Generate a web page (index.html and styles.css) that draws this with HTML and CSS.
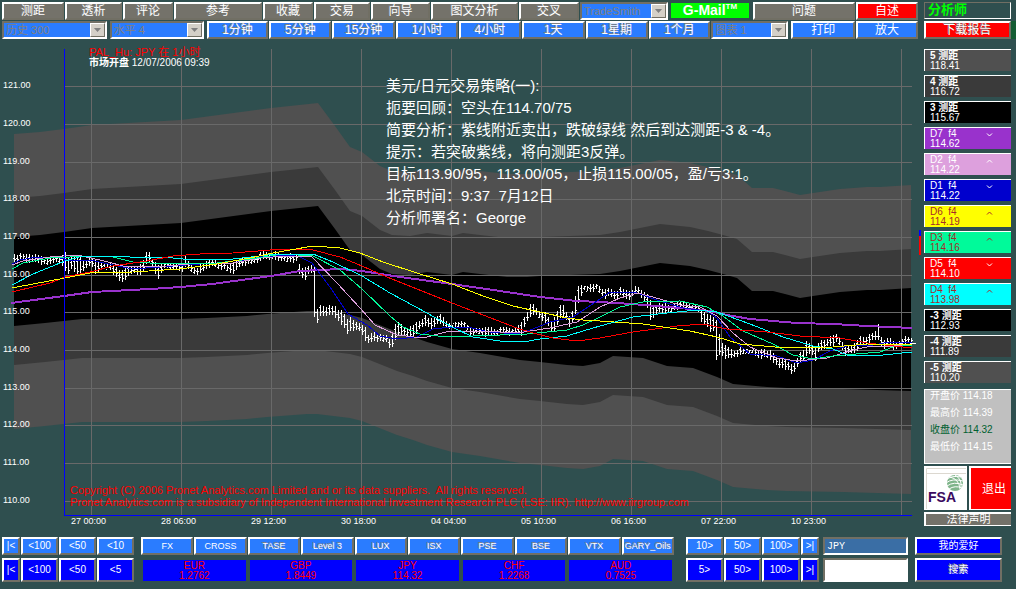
FILE: index.html
```html
<!DOCTYPE html>
<html lang="zh-CN">
<head>
<meta charset="utf-8">
<title>分析师</title>
<link rel="stylesheet" href="styles.css">
</head>
<body>
<div class="top">
  <main class="main">
    <nav class="bar bar-menu">
      <button class="btn gray dim">测距</button>
      <button class="btn gray dim">透析</button>
      <button class="btn gray dim">评论</button>
      <button class="btn gray dim">参考</button>
      <button class="btn gray dim">收藏</button>
      <button class="btn gray dim">交易</button>
      <button class="btn gray dim">向导</button>
      <button class="btn gray dim">图文分析</button>
      <button class="btn gray dim">交叉</button>
      <span class="pick"><select aria-label="TradeSmith"><option>TradeSmith</option></select><svg class="arrow" viewBox="0 0 15 15"><path d="M3 5h9l-4.500 5z"/></svg></span>
      <button class="gmail">G-Mail<sup>TM</sup></button>
      <button class="btn gray dim">问题</button>
      <button class="btn red">自述</button>
    </nav>
    <nav class="bar bar-time">
      <span class="pick"><select aria-label="历史"><option>历史 300</option></select><svg class="arrow" viewBox="0 0 15 15"><path d="M3 5h9l-4.500 5z"/></svg></span>
      <span class="pick"><select aria-label="水平"><option>水平 4</option></select><svg class="arrow" viewBox="0 0 15 15"><path d="M3 5h9l-4.500 5z"/></svg></span>
      <button class="btn sky dim">1分钟</button>
      <button class="btn sky dim">5分钟</button>
      <button class="btn sky dim">15分钟</button>
      <button class="btn sky dim">1小时</button>
      <button class="btn sky dim">4小时</button>
      <button class="btn sky dim">1天</button>
      <button class="btn sky dim">1星期</button>
      <button class="btn sky dim">1个月</button>
      <span class="pick"><select aria-label="图表"><option>图表 1</option></select><svg class="arrow" viewBox="0 0 15 15"><path d="M3 5h9l-4.500 5z"/></svg></span>
      <button class="btn sky">打印</button>
      <button class="btn sky">放大</button>
    </nav>
    <section class="chart">
      <svg class="plot" viewBox="0 40 918 490" role="img" aria-label="JPY 1小时">
        <g id="bands"></g>
        <path class="grid" d="M91.500 49V515M181.500 49V515M271.500 49V515M361.500 49V515M451.500 49V515M541.500 49V515M631.500 49V515M721.500 49V515M811.500 49V515M901.500 49V515M64 86.500H912M64 124.500H912M64 162.500H912M64 199.500H912M64 237.500H912M64 275.500H912M64 312.500H912M64 350.500H912M64 388.500H912M64 425.500H912M64 463.500H912M64 501.500H912"/>
        <path id="bars" class="bars"/>
        <g class="lines">
          <polyline class="d7" points="11,303 64,296 92,292 150,289 181,287 212,284 271,276 300,271 340,269 362,271 400,277 452,284 500,291 540,297 577,301 600,302 632,304 680,308 710,311 727,315 750,319 797,323 833,324 867,326 912,328"/>
          <polyline class="d1" points="12,264 20,260 37,257 57,257 67,260 90,260 113,265 133,269 160,267 200,264 233,263 260,257 290,255 300,257 312,263 330,287 348,314 367,325 380,336 397,339 417,337 433,329 452,327 467,327 490,332 517,334 533,329 550,322 573,317 597,301 610,292 637,293 660,301 683,308 707,311 717,318 730,337 750,354 777,356 797,363 813,360 830,351 847,346 873,345 890,342 912,342"/>
          <polyline class="d2" points="12,265 23,261 50,257 77,255 100,260 127,267 167,266 200,263 233,263 260,258 287,256 312,257 337,283 360,308 375,325 397,335 423,338 450,331 483,331 517,333 550,328 577,322 600,307 620,298 638,293 660,299 680,305 700,307 717,316 733,333 750,347 777,358 797,361 827,358 853,350 867,347 893,346 912,344"/>
          <polyline class="d3" points="12,269 23,263 50,258 90,256 113,257 133,262 167,264 217,263 250,259 283,254 313,256 340,270 362,289 390,316 403,327 420,334 447,337 473,336 527,334 567,330 583,325 600,317 620,307 643,302 680,301 707,307 723,316 743,331 773,344 793,355 813,359 833,356 880,352 893,347 912,345"/>
          <polyline class="d4" points="12,285 33,274 65,261 83,256 113,256 130,257 163,257 183,259 233,259 277,254 313,254 333,262 362,276 390,293 427,313 452,327 473,337 500,341 523,342 540,339 567,336 583,331 600,326 633,317 667,313 697,310 717,312 750,324 783,337 813,346 833,349 847,355 883,355 912,352"/>
          <polyline class="d5" points="12,292 33,287 50,283 65,277 90,272 113,266 147,261 173,256 200,254 233,253 283,249 313,250 340,257 362,266 387,277 427,293 452,303 483,315 517,328 533,333 553,338 577,341 600,338 633,332 677,326 703,324 727,329 767,332 800,336 840,338 867,343 912,348"/>
          <polyline class="d6" points="12,288 33,284 65,278 90,273 133,272 180,269 217,264 250,258 273,253 313,246 340,248 360,253 383,262 417,273 452,284 483,296 513,306 540,312 567,318 583,320 600,321 643,324 690,331 717,337 740,344 787,348 833,347 867,344 912,345"/>
        </g>
        <path class="axis" d="M64.500 49V515.500H912"/>
        <path class="mark-blue" d="M920 230v6"/>
        <path class="mark-red" d="M920 236v19"/>
        <g class="label">
          <text x="3" y="88">121.00</text><text x="3" y="126">120.00</text><text x="3" y="164">119.00</text>
          <text x="3" y="201">118.00</text><text x="3" y="239">117.00</text><text x="3" y="277">116.00</text>
          <text x="3" y="314">115.00</text><text x="3" y="352">114.00</text><text x="3" y="390">113.00</text>
          <text x="3" y="427">112.00</text><text x="3" y="465">111.00</text><text x="3" y="503">110.00</text>
        </g>
        <g class="label">
          <text x="71" y="524">27 00:00</text><text x="161" y="524">28 06:00</text><text x="251" y="524">29 12:00</text>
          <text x="341" y="524">30 18:00</text><text x="431" y="524">04 04:00</text><text x="521" y="524">05 10:00</text>
          <text x="611" y="524">06 16:00</text><text x="701" y="524">07 22:00</text><text x="791" y="524">10 23:00</text>
        </g>
        <g class="legal">
          <text x="70" y="494">Copyright (C) 2006 Pronet Analytics.com Limited and or its data suppliers.&#160; All rights reserved.</text>
          <text x="70" y="506">Pronet Analytics.com is a subsidiary of Independent International Investment Research PLC (LSE: IIR). http://www.iirgroup.com</text>
        </g>
        <text class="title" x="89" y="56">PAL_Hu: JPY 在 1小时</text>
        <text class="open" x="89" y="66"><tspan class="strong">市场开盘</tspan> 12/07/2006 09:39</text>
      </svg>
      <div class="notes">
        <p>美元/日元交易策略(一):</p>
        <p>扼要回顾：空头在114.70/75</p>
        <p>简要分析：紫线附近卖出，跌破绿线 然后到达测距-3 &amp; -4。</p>
        <p>提示：若突破紫线，将向测距3反弹。</p>
        <p>目标113.90/95，113.00/05，止损115.00/05，盈/亏3:1。</p>
        <p>北京时间：9:37&nbsp; 7月12日</p>
        <p>分析师署名：George</p>
      </div>
    </section>
  </main>
  <aside class="side">
    <h1 class="brand">分析师</h1>
    <button class="btn red report dim">下载报告</button>
    <ul class="cards">
      <li class="card g5"><b>5 测距</b><span>118.41</span></li>
      <li class="card g4"><b>4 测距</b><span>116.72</span></li>
      <li class="card g3"><b>3 测距</b><span>115.67</span></li>
      <li class="card c7"><i>D7&nbsp; f4</i><span>114.62</span><svg class="chev" viewBox="0 0 7 4"><path d="M1 .5l2.500 2.500L6 .5"/></svg></li>
      <li class="card c2"><i>D2&nbsp; f4</i><span>114.22</span><svg class="chev" viewBox="0 0 7 4"><path d="M1 3.500L3.500 1 6 3.500"/></svg></li>
      <li class="card c1"><i>D1&nbsp; f4</i><span>114.22</span><svg class="chev" viewBox="0 0 7 4"><path d="M1 .5l2.500 2.500L6 .5"/></svg></li>
      <li class="card c6"><i>D6&nbsp; f4</i><span>114.19</span><svg class="chev" viewBox="0 0 7 4"><path d="M1 3.500L3.500 1 6 3.500"/></svg></li>
      <li class="card c3"><i>D3&nbsp; f4</i><span>114.16</span><svg class="chev" viewBox="0 0 7 4"><path d="M1 3.500L3.500 1 6 3.500"/></svg></li>
      <li class="card c5"><i>D5&nbsp; f4</i><span>114.10</span><svg class="chev" viewBox="0 0 7 4"><path d="M1 .5l2.500 2.500L6 .5"/></svg></li>
      <li class="card c4"><i>D4&nbsp; f4</i><span>113.98</span><svg class="chev" viewBox="0 0 7 4"><path d="M1 3.500L3.500 1 6 3.500"/></svg></li>
      <li class="card g3"><b>-3 测距</b><span>112.93</span></li>
      <li class="card g4"><b>-4 测距</b><span>111.89</span></li>
      <li class="card g5"><b>-5 测距</b><span>110.20</span></li>
    </ul>
    <div class="quote">
      <p>开盘价 114.18</p>
      <p>最高价 114.39</p>
      <p class="close">收盘价 114.32</p>
      <p>最低价 114.15</p>
    </div>
    <div class="pair">
      <a class="fsa" href="#" aria-label="FSA">
        <svg viewBox="0 0 43 44">
          <path class="fsa-line" d="M2.500 43V2.500H42M3 7.500H42"/>
          <circle class="globe" cx="31" cy="17" r="8"/>
          <path class="globe-cut" d="M22 14q5-5 15-3M22 17q6-5 17-2M23 20q7-5 16-1M25 23q6-4 13-1M26 11q9 2 10 12M31 9q7 4 6 12"/>
          <text class="fsa-name" x="4" y="36">FSA</text>
        </svg>
      </a>
      <button class="exit">退出</button>
    </div>
    <button class="terms">法律声明</button>
  </aside>
  <div class="edge"></div>
</div>
<footer class="foot">
  <div class="nav nav-back">
    <button class="btn sky">|&lt;</button><button class="btn sky">&lt;100</button><button class="btn sky">&lt;50</button><button class="btn sky">&lt;10</button>
    <button class="btn blue">|&lt;</button><button class="btn blue">&lt;100</button><button class="btn blue">&lt;50</button><button class="btn blue">&lt;5</button>
  </div>
  <div class="market">
    <div class="tabs">
      <button class="btn sky">FX</button><button class="btn sky">CROSS</button><button class="btn sky dim">TASE</button><button class="btn sky dim">Level 3</button><button class="btn sky dim">LUX</button><button class="btn sky dim">ISX</button><button class="btn sky dim">PSE</button><button class="btn sky dim">BSE</button><button class="btn sky dim">VTX</button><button class="btn sky dim">GARY_Oils</button>
    </div>
    <div class="rates">
      <button class="rate">EUR<br>1.2762</button><button class="rate">GBP<br>1.8449</button><button class="rate">JPY<br>114.32</button><button class="rate">CHF<br>1.2268</button><button class="rate">AUD<br>0.7525</button>
    </div>
  </div>
  <div class="nav nav-fwd">
    <button class="btn sky">10&gt;</button><button class="btn sky">50&gt;</button><button class="btn sky">100&gt;</button><button class="btn sky">&gt;|</button>
    <button class="btn blue">5&gt;</button><button class="btn blue">50&gt;</button><button class="btn blue">100&gt;</button><button class="btn blue">&gt;|</button>
  </div>
  <div class="stack">
    <input class="field code" type="text" value="JPY" aria-label="代码">
    <input class="field" type="text" aria-label="搜索">
  </div>
  <div class="stack last">
    <button class="btn blue">我的爱好</button>
    <button class="btn blue dim">搜索</button>
  </div>
</footer>
<script src="chart.js"></script>
</body>
</html>
```
FILE: styles.css
```css
* { box-sizing: border-box; }

body {
  margin: 0;
  background: #2f4f4f;
  color: #fff;
  font: 10px/10px "Liberation Sans", "Noto Sans CJK SC", sans-serif;
}

button, select, input { font: inherit; color: inherit; margin: 0; padding: 0; min-width: 0; border-radius: 0; }
p, ul, h1 { margin: 0; padding: 0; }

.top { display: flex; gap: 6px; padding-top: 2px; overflow: hidden; }
.main { flex: 1; min-width: 0; }
.bar { display: grid; gap: 1px; padding-left: 2px; height: 18px; }
.bar-menu { grid-template-columns: 62fr 57fr 50fr 88fr 50fr 56fr 59fr 87fr 60fr 90fr 81fr 102fr 62fr; }
.bar-time { grid-template-columns: 107fr 96fr 62fr 62fr 63fr 62fr 62fr 63fr 62fr 62fr 79fr 64fr 62fr; margin: 1px 0; }

.btn {
  border: 2px solid;
  border-color: #fff #716f64 #716f64 #fff;
  font-size: 10px;
  line-height: 12px;
  text-align: center;
  white-space: nowrap;
  overflow: hidden;
}
.bar .btn, .report { height: 18px; font-size: 12px; line-height: 14px; }
.gray { background: #74726a; }
.sky { background: #2a7cff; }
.blue { background: #00f; }
.red { background: #f00; }
.dim { text-shadow: -1px -1px 0 #808080; }

.pick { position: relative; display: flex; height: 18px; margin-right: 2px; border: 2px solid; border-color: #716f64 #fff #fff #716f64; }
.pick select { flex: 1; appearance: none; border: 0; background: #2a7cff; color: #808080; font-size: 11px; line-height: 14px; padding-left: 2px; }
.arrow { position: absolute; right: 0; top: 0; width: 15px; height: 14px; background: #d4d0c8; border: 1px solid; border-color: #fff #716f64 #716f64 #fff; fill: #808080; }
.gmail { margin: 1px 3px 0 0; height: 15px; border: 0; background: #0f0; font-size: 14px; line-height: 15px; font-weight: bold; }
.gmail sup { font-size: 8px; line-height: 0; vertical-align: 6px; }

.chart { position: relative; }
.plot { display: block; width: 100%; height: auto; overflow: visible; }
.band-far { fill: #505050; }
.band-mid { fill: #3a3a3a; }
.band-near { fill: #000; }
.grid, .axis, .bars, .mark-blue, .mark-red { fill: none; stroke-width: 1; shape-rendering: crispEdges; }
.grid { stroke: #696969; }
.axis { stroke: #00f; }
.bars { stroke: #fff; }
.mark-blue { stroke: #00f; stroke-width: 2; }
.mark-red { stroke: #f00; stroke-width: 2; }
.lines { fill: none; stroke-width: 1; shape-rendering: crispEdges; }
.d1 { stroke: #0000cd; }
.d2 { stroke: #dda0dd; }
.d3 { stroke: #00fa9a; }
.d4 { stroke: #0ff; }
.d5 { stroke: #f00; }
.d6 { stroke: #ff0; }
.d7 { stroke: #9932cc; stroke-width: 2; }
.label { fill: #fff; font-size: 9px; }
.legal { fill: #f00; font-size: 11px; }
.title { fill: #f00; font-size: 11px; }
.open { fill: #fff; font-size: 10px; }
.strong { font-weight: bold; }

.notes { position: absolute; left: 386px; top: 35px; font-size: 15px; line-height: 22px; white-space: nowrap; }

.side { width: 87px; display: flex; flex-direction: column; }
.brand { height: 17px; padding-left: 3px; border: 1px solid; border-color: #716f64 #fff #fff #716f64; color: #0f0; font-size: 13px; line-height: 14px; }
.report { margin-top: 2px; }
.edge { width: 5px; height: 18px; margin: 19px 0 0 -6px; background: #145c33; }
.cards { list-style: none; display: grid; gap: 4px; margin-top: 10px; }
.card { position: relative; height: 22px; padding: 1px 0 0 5px; border: solid #fff; border-width: 1px 0 0 1px; }
.card b, .card i, .card span { display: block; font-style: normal; line-height: 10px; }
.chev { position: absolute; right: 18px; top: 5px; width: 7px; height: 4px; fill: none; stroke: currentColor; }
.g5 { background: #505050; }
.g4 { background: #3a3a3a; }
.g3 { background: #000; }
.c1 { background: #0000cd; }
.c2 { background: #dda0dd; }
.c3 { background: #00fa9a; color: #a52a2a; }
.c4 { background: #0ff; color: #a52a2a; }
.c5 { background: #f00; }
.c6 { background: #ff0; color: #a52a2a; }
.c7 { background: #9932cc; }

.quote { margin-top: 6px; height: 75px; padding: 0 0 0 5px; border: 1px solid #fff; border-right: 0; background: #c0c0c0; }
.quote p { height: 17px; line-height: 12px; }
.quote .close { color: #006030; }
.pair { display: grid; grid-template-columns: 43fr 42fr; gap: 2px; margin-top: 2px; height: 44px; }
.fsa { background: #fff; }
.fsa svg { display: block; width: 100%; height: 100%; }
.fsa-line { fill: none; stroke: #dcd8d0; }
.globe { fill: #7fb58b; }
.globe-cut { fill: none; stroke: #fff; stroke-width: 1; }
.fsa-name { fill: #3b0a60; font-size: 14px; font-weight: bold; }
.exit { border: 2px solid #fff; border-width: 2px 0 1px 2px; background: #f00; font-size: 12px; padding-left: 6px; }
.terms { height: 14px; margin-top: 2px; border: 2px solid #fff; border-width: 2px 0 1px 2px; background: #74726a; font-size: 11px; line-height: 11px; }

.foot { display: grid; grid-template-columns: 132fr 536fr 141fr 85fr 90fr; gap: 4px; padding: 0 14px 0 2px; margin-top: 7px; }
.nav { display: grid; grid-template-rows: 18px 24px; gap: 3px 1px; }
.nav-back { grid-template-columns: 18fr 37fr 37fr 37fr; }
.nav-fwd { grid-template-columns: 37fr 37fr 38fr 18fr; padding-left: 8px; }
.market { padding-left: 3px; }
.tabs { display: grid; grid-template-columns: repeat(10, 1fr); gap: 1px; }
.tabs .btn { height: 18px; font-size: 9px; }
.rates { display: grid; grid-template-columns: repeat(5, 1fr); gap: 4px; margin-top: 5px; padding: 0 2px; }
.rate { height: 21px; border: 0; background: #00f; color: #f00; }
.stack { display: grid; grid-template-rows: 18px 24px; gap: 3px; }
.last { padding-left: 3px; }
.field { width: 100%; border: 2px solid; border-color: #716f64 #fff #fff #716f64; background: #fff; color: #000; }
.code { background: #3a6ea5; color: #fff; font-family: "Liberation Mono", monospace; padding-left: 2px; }
```
FILE: chart.js
```js
const upper = [[14,237],[40,235],[64,232],[92,228],[181,223],[271,211],[318,206],[335,229],[350,250],[362,255],[380,269],[392,274],[410,275],[427,272],[452,275],[463,272],[480,274],[507,277],[527,277],[540,276],[600,274],[620,271],[640,267],[660,263],[690,266],[708,270],[723,274],[737,278],[752,291],[773,291],[785,294],[800,298],[813,296],[840,292],[867,290],[880,290],[911,288]];
const lower = [[14,326],[45,323],[82,319],[180,319],[207,318],[247,316],[267,314],[307,311],[317,311],[350,315],[362,318],[377,324],[397,332],[413,337],[427,342],[452,349],[480,353],[520,360],[540,362],[567,365],[583,366],[600,363],[613,356],[643,358],[667,366],[693,368],[717,377],[733,384],[767,387],[787,388],[843,389],[911,391]];

// x, high, low of each sampled price bar
const price = [[14,253,263],[20,254,261],[24,255,260],[27,253,263],[35,255,262],[41,256,264],[44,258,265],[48,257,265],[54,256,262],[60,255,264],[65,253,270],[68,258,275],[72,256,267],[75,257,275],[80,258,274],[84,262,270],[88,257,265],[92,258,268],[96,262,276],[99,262,270],[105,262,268],[110,264,270],[114,266,276],[120,270,283],[124,268,280],[130,266,275],[134,265,273],[141,265,277],[144,258,268],[147,249,262],[150,253,261],[154,262,273],[158,265,279],[162,263,270],[168,263,268],[174,265,270],[182,262,272],[185,257,266],[190,264,272],[195,268,275],[200,265,274],[205,262,270],[210,258,267],[214,260,267],[218,263,269],[223,262,270],[230,265,273],[234,262,273],[240,257,266],[248,258,265],[255,256,263],[260,253,262],[264,251,258],[270,254,260],[276,252,261],[280,253,260],[285,256,263],[290,254,262],[296,254,262],[300,267,278],[305,268,279],[310,265,272],[313,265,276],[314,266,316],[317,308,322],[321,305,315],[325,308,317],[330,304,314],[334,306,317],[338,310,321],[342,310,325],[347,318,334],[351,318,330],[355,322,331],[360,322,331],[364,325,339],[368,335,344],[373,331,341],[377,333,341],[382,336,342],[386,335,342],[390,340,349],[393,330,348],[396,322,337],[400,323,334],[405,328,336],[411,327,338],[416,322,335],[420,320,328],[425,316,325],[428,318,328],[432,318,330],[437,315,323],[441,315,326],[446,321,328],[452,324,328],[458,322,327],[462,320,326],[467,324,330],[470,328,337],[475,328,334],[480,327,334],[486,328,337],[490,326,335],[496,329,335],[502,327,333],[508,327,335],[515,328,335],[521,322,335],[525,315,325],[530,305,317],[534,304,313],[538,311,318],[542,311,321],[546,314,324],[551,322,332],[555,315,332],[558,308,321],[562,303,317],[566,312,320],[570,317,329],[573,306,322],[576,292,310],[579,284,300],[583,285,291],[590,285,292],[597,284,290],[600,286,295],[605,290,298],[610,288,297],[615,291,300],[620,288,296],[625,290,299],[630,290,300],[634,287,294],[639,288,294],[643,291,300],[647,293,308],[650,301,320],[654,307,317],[658,302,312],[664,303,313],[670,307,313],[676,301,309],[682,302,309],[690,304,311],[698,305,312],[702,310,325],[706,312,326],[710,316,332],[714,318,330],[716,320,360],[720,338,354],[724,345,358],[729,348,359],[734,350,357],[740,348,356],[746,349,353],[752,349,354],[758,351,358],[763,348,358],[768,350,358],[773,353,362],[778,359,369],[783,357,368],[788,362,371],[791,364,374],[795,360,371],[798,355,364],[803,350,362],[806,341,356],[810,343,352],[815,349,361],[819,341,349],[824,339,350],[828,338,345],[832,336,346],[836,334,343],[840,338,346],[845,346,355],[850,347,354],[856,340,352],[860,337,346],[865,338,345],[869,333,342],[873,332,341],[878,332,340],[881,337,345],[885,340,351],[888,336,343],[892,341,349],[896,343,350],[900,339,347],[905,337,343],[911,338,344]];

function band(name, off) {
  const p = document.createElementNS("http://www.w3.org/2000/svg", "polygon");
  const up = upper.map(([x, y]) => [x, y - off]);
  const down = lower.map(([x, y]) => [x, y + off]).reverse();
  p.setAttribute("class", name);
  p.setAttribute("points", up.concat(down).join(" "));
  document.getElementById("bands").append(p);
}
band("band-far", 103);
band("band-mid", 39);
band("band-near", 0);

let d = "";
let k = 0;
for (let x = 14; x <= 911; x += 3) {
  while (k < price.length - 2 && price[k + 1][0] <= x) k++;
  const [x0, h0, l0] = price[k];
  const [x1, h1, l1] = price[k + 1];
  const t = (x - x0) / (x1 - x0);
  const wob = (x * 7) % 5 - 2;
  const hi = Math.round(h0 + (h1 - h0) * t + wob / 2);
  const lo = Math.round(l0 + (l1 - l0) * t + ((x * 11) % 4 - 2) / 2);
  const open = hi + 2 + (x % 4);
  const close = lo - 2 - (x % 3);
  d += `M${x + 0.5} ${hi}V${lo}M${x - 1} ${open + 0.5}h1M${x + 1} ${close + 0.5}h1`;
}
d += "M314.5 266V317M716.5 320V360M878.5 324V340M912 343.5h4";
document.getElementById("bars").setAttribute("d", d);
```
